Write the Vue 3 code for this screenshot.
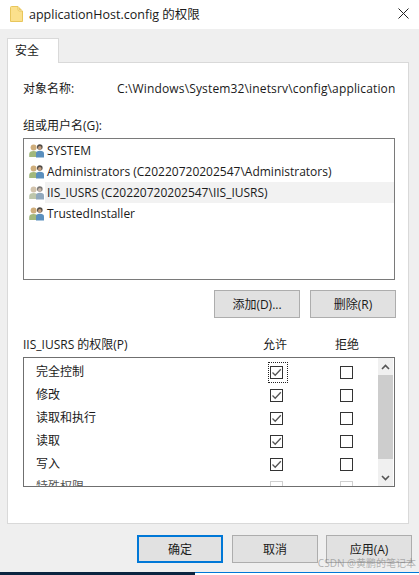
<script setup>
const users = [
  { name: 'SYSTEM' },
  { name: 'Administrators (C20220720202547\\Administrators)' },
  { name: 'IIS_IUSRS (C20220720202547\\IIS_IUSRS)', selected: true },
  { name: 'TrustedInstaller' }
]
const perms = [
  { name: '完全控制', allow: true, focus: true },
  { name: '修改', allow: true },
  { name: '读取和执行', allow: true },
  { name: '读取', allow: true },
  { name: '写入', allow: true },
  { name: '特殊权限', disabled: true }
]
</script>

<template>
  <div class="win">
    <header class="title">
      <svg class="folder" width="13" height="16" viewBox="0 0 13 16">
        <path d="M.5 1.5 Q.5.5 1.5.5 H8 V3.5 Q8 5 9.5 5 H12.5 V15.5 H.5 Z" fill="#fbe08c" stroke="#e8c65c" />
        <path d="M8.5 .5 L12.5 4.5 H9.5 Q8.5 4.5 8.5 3.5 Z" fill="#eccb66" />
      </svg>
      <span class="title-text">applicationHost.config 的权限</span>
      <svg class="close" width="11" height="11" viewBox="0 0 11 11">
        <path d="M.5.5 L10.5 10.5 M10.5.5 L.5 10.5" stroke="#222" stroke-width="1" fill="none" />
      </svg>
    </header>

    <div class="body">
      <div class="tabs"><div class="tab">安全</div></div>
      <section class="panel">
        <div class="obj">
          <span class="obj-label">对象名称:</span>
          <span class="obj-value">C:\Windows\System32\inetsrv\config\applicationHost.config</span>
        </div>

        <div class="label group-label">组或用户名(G):</div>
        <div class="users">
          <div v-for="u in users" :key="u.name" class="user" :class="{ sel: u.selected }">
            <svg class="uicon" :class="{ dim: u.selected }" width="16" height="14" viewBox="0 0 16 14">
              <circle cx="4.6" cy="3.6" r="3" fill="#cfae7c" />
              <path d="M.2 13 V10 Q.2 7 4.6 7 Q8.6 7 8.6 10 V13 Z" fill="#a2b87c" />
              <circle cx="10.8" cy="3" r="2.8" fill="#4f4a44" />
              <circle cx="10.8" cy="3.9" r="1.8" fill="#c49f80" />
              <path d="M7 13.5 V9.5 Q7 6.8 10.8 6.8 Q15 6.8 15 9.5 V13.5 Z" fill="#5a8fbe" />
            </svg>
            <span class="uname">{{ u.name }}</span>
          </div>
        </div>

        <div class="user-btns">
          <button class="btn">添加(D)...</button>
          <button class="btn">删除(R)</button>
        </div>

        <div class="perm-head">
          <span class="perm-title">IIS_IUSRS 的权限(P)</span>
          <span class="col">允许</span>
          <span class="col wide">拒绝</span>
        </div>

        <div class="perms">
          <div class="perm-rows">
            <div v-for="p in perms" :key="p.name" class="perm" :class="{ off: p.disabled }">
              <span class="perm-name">{{ p.name }}</span>
              <span class="cell">
                <span class="focus" :class="{ on: p.focus }">
                  <span class="box">
                    <svg v-if="p.allow" width="11" height="11" viewBox="0 0 11 11">
                      <path d="M1.5 5.5 L4.2 8.2 L9.8 2.2" fill="none" stroke="#555" stroke-width="1.3" />
                    </svg>
                  </span>
                </span>
              </span>
              <span class="cell">
                <span class="focus"><span class="box"></span></span>
              </span>
            </div>
          </div>
          <div class="scroll">
            <div class="sbtn">
              <svg width="9" height="6" viewBox="0 0 9 6">
                <path d="M1 5 L4.5 1.5 L8 5" fill="none" stroke="#555" stroke-width="1.6" />
              </svg>
            </div>
            <div class="thumb"></div>
            <div class="track"></div>
            <div class="sbtn">
              <svg width="9" height="6" viewBox="0 0 9 6">
                <path d="M1 1 L4.5 4.5 L8 1" fill="none" stroke="#555" stroke-width="1.6" />
              </svg>
            </div>
          </div>
        </div>
      </section>

      <footer class="foot">
        <button class="btn primary">确定</button>
        <button class="btn">取消</button>
        <button class="btn">应用(A)</button>
      </footer>
    </div>

    <div class="taskbar"><div class="dark"></div></div>
    <div class="wm">CSDN @黄鹏的笔记本</div>
  </div>
</template>

<style>
html, body { margin: 0; background: #fff; }
</style>

<style scoped>
.win {
  position: relative;
  width: 419px;
  height: 575px;
  overflow: hidden;
  display: flex;
  flex-direction: column;
  background: #fff;
  font-family: "Open Sans", "Noto Sans CJK SC", sans-serif;
  font-size: 12px;
  color: #1a1a1a;
}
.title {
  height: 29px;
  flex: none;
  display: flex;
  align-items: center;
  padding: 0 10px 2px 10px;
  box-sizing: border-box;
}
.folder { flex: none; margin-right: 6px; }
.title-text { flex: 1; font-size: 12.5px; white-space: nowrap; }
.close { flex: none; }
.body {
  flex: 1;
  background: #efefef;
  display: flex;
  flex-direction: column;
  padding: 9px 10px 0 7px;
  min-height: 0;
}
.tabs { height: 24px; display: flex; flex: none; position: relative; z-index: 1; }
.tab {
  width: 52px;
  height: 25px;
  box-sizing: border-box;
  background: #fff;
  border: 1px solid #d9d9d9;
  border-bottom: none;
  padding: 3px 0 0 7px;
  line-height: 18px;
}
.panel {
  width: 402px;
  height: 462px;
  flex: none;
  box-sizing: border-box;
  background: #fff;
  border: 1px solid #d9d9d9;
  padding: 0 13px 0 15px;
}
.obj { display: flex; margin-top: 17px; height: 18px; line-height: 18px; white-space: nowrap; overflow: hidden; }
.obj-label { width: 94px; flex: none; }
.obj-value { flex: 1; overflow: hidden; letter-spacing: .15px; }
.label { line-height: 18px; }
.group-label { margin-top: 19px; height: 18px; margin-bottom: 3px; }
.users {
  height: 142px;
  box-sizing: border-box;
  border: 1px solid #7a7a7a;
  padding: 1px 0 0 5px;
}
.user { height: 21px; display: flex; align-items: center; white-space: nowrap; }
.uicon { flex: none; }
.uicon.dim { opacity: .75; filter: saturate(.6); }
.uname { padding-left: 2px; line-height: 21px; }
.user.sel .uname { background: #f2f2f2; flex: 1; }
.user-btns { display: flex; justify-content: flex-end; gap: 10px; margin: 10px -1px 0 0; }
.btn {
  width: 86px;
  height: 28px;
  box-sizing: border-box;
  padding: 0;
  background: #e1e1e1;
  border: 1px solid #adadad;
  font: inherit;
  color: #1a1a1a;
}
.perm-head { display: flex; align-items: center; height: 18px; margin-top: 17px; }
.perm-title { width: 217px; flex: none; }
.col { width: 70px; text-align: center; flex: none; }
.col.wide { width: 74px; }
.perms {
  height: 130px;
  margin-top: 4px;
  box-sizing: border-box;
  border: 1px solid #6f6f6f;
  display: flex;
  overflow: hidden;
}
.perm-rows { flex: 1; min-width: 0; padding: 3px 0 0 12px; }
.perm { height: 23px; display: flex; align-items: center; }
.perm-name { width: 205px; flex: none; line-height: 18px; padding-bottom: 1px; }
.cell { width: 70px; flex: none; display: flex; padding-left: 27px; box-sizing: border-box; }
.focus { padding: 3px 4px 3px 1px; display: flex; border: 1px dotted transparent; }
.focus.on { border-color: #222; }
.box {
  width: 13px;
  height: 13px;
  box-sizing: border-box;
  border: 1px solid #333;
  display: flex;
  align-items: center;
  justify-content: center;
  background: #fff;
}
.box svg { flex: none; }
.perm.off .box { border-color: #cfcfcf; }
.perm.off { color: #555; }
.scroll {
  width: 15px;
  flex: none;
  background: #f0f0f0;
  margin-right: 1px;
  display: flex;
  flex-direction: column;
}
.sbtn { height: 17px; flex: none; display: flex; align-items: center; justify-content: center; }
.thumb { height: 84px; flex: none; background: #cdcdcd; }
.track { flex: 1; }
.foot { display: flex; justify-content: flex-end; gap: 9px; margin: 11px -3px 0 0; }
.foot .btn:last-child { margin-left: -1px; }
.btn.primary { border: 2px solid #0078d7; }
.taskbar {
  height: 3px;
  flex: none;
  background: #fff;
  border-top: 1px solid #0078d7;
  box-sizing: border-box;
}
.dark { width: 195px; height: 3px; margin-top: -1px; background: #0b2540; }
.wm {
  position: absolute;
  right: 3px;
  bottom: 5px;
  font-size: 10px;
  color: rgba(120, 120, 120, .55);
  white-space: nowrap;
}
</style>
